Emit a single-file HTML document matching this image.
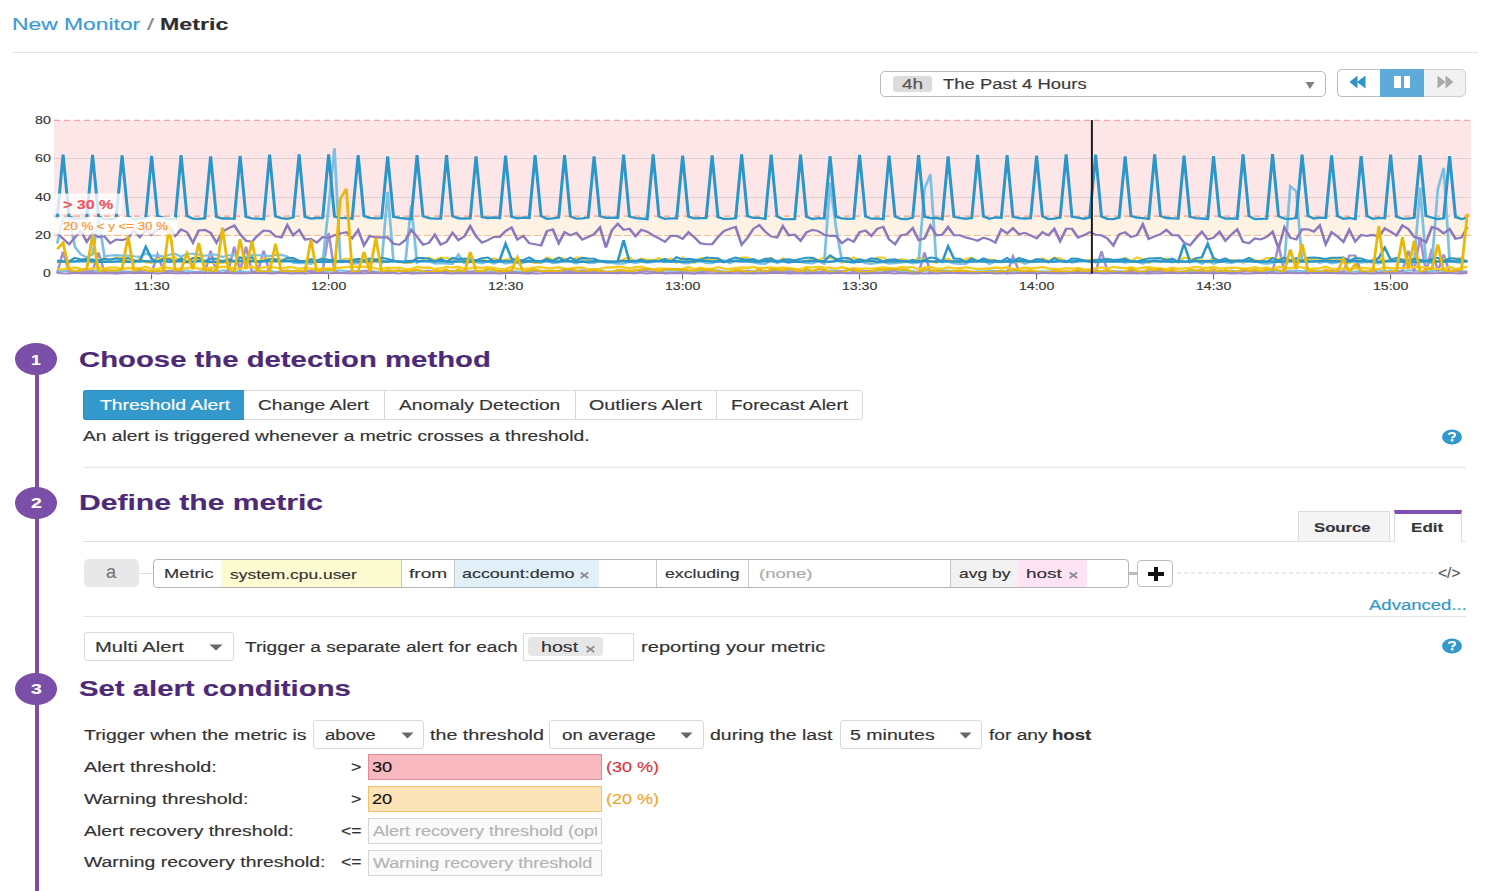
<!DOCTYPE html>
<html><head><meta charset="utf-8"><title>New Monitor / Metric</title>
<style>
html,body{margin:0;padding:0}
body{width:1496px;height:891px;overflow:hidden;background:#fff;position:relative;font-family:"Liberation Sans",sans-serif}
.t{position:absolute;white-space:nowrap;transform-origin:0 0;line-height:1;-webkit-text-stroke:0.15px currentColor}
.b{position:absolute;box-sizing:border-box}
svg.b{overflow:visible}
</style></head><body>
<div class="b" style="left:12.5px;top:52.0px;width:1465.5px;height:1.0px;background:#e3e3e3"></div>
<div class="b" style="left:880.4px;top:71.2px;width:445.4px;height:25.6px;border:1px solid #b9b9b9;border-radius:5px;background:#fff"></div>
<div class="b" style="left:893.0px;top:75.5px;width:39.0px;height:16.5px;background:#dcdcdc;border-radius:3px"></div>
<svg class="b" style="left:1305px;top:81px" width="10" height="9"><path d="M0.5,1 L9.5,1 L5,8 Z" fill="#808080"/></svg>
<div class="b" style="left:1337.4px;top:69.2px;width:128.9px;height:27.6px;border:1px solid #cfcfcf;border-radius:5px;background:#f1f1f1"></div>
<div class="b" style="left:1337.4px;top:69.2px;width:42.6px;height:27.6px;border:1px solid #bdbdbd;border-right:none;border-radius:5px 0 0 5px;background:#fff"></div>
<div class="b" style="left:1380.0px;top:69.2px;width:43.5px;height:27.6px;background:#5eaad8"></div>
<svg class="b" style="left:1349px;top:75px" width="18" height="14"><path d="M0.5,7 L8.5,0.5 L8.5,13.5 Z M8,7 L16.5,0.5 L16.5,13.5 Z" fill="#2e93c9"/></svg>
<div class="b" style="left:1394.0px;top:76.0px;width:6.5px;height:12.4px;background:#fff"></div>
<div class="b" style="left:1403.5px;top:76.0px;width:6.5px;height:12.4px;background:#fff"></div>
<svg class="b" style="left:1437px;top:75px" width="18" height="14"><path d="M0.5,0.5 L8.5,7 L0.5,13.5 Z M8.5,0.5 L16.5,7 L8.5,13.5 Z" fill="#a9a9a9"/></svg>
<svg class="b" style="left:0;top:0" width="1496" height="300">
<rect x="54" y="120.4" width="1417" height="95.8" fill="#fde6e7"/>
<rect x="54" y="216.2" width="1417" height="19.3" fill="#fef2e5"/>
<line x1="54" x2="1471" y1="158.5" y2="158.5" stroke="#ddd0d1" stroke-width="1"/>
<line x1="54" x2="1471" y1="197.5" y2="197.5" stroke="#ddd0d1" stroke-width="1"/>
<line x1="54" x2="1471" y1="120.4" y2="120.4" stroke="#f3a3a6" stroke-width="1.2" stroke-dasharray="6,4"/>
<line x1="54" x2="1471" y1="216.2" y2="216.2" stroke="#f4a080" stroke-width="1.2" stroke-dasharray="6,4"/>
<line x1="54" x2="1471" y1="235.5" y2="235.5" stroke="#f1bd8c" stroke-width="1.2" stroke-dasharray="7,3"/>
<clipPath id="pc"><rect x="54" y="100" width="1417" height="175"/></clipPath><g clip-path="url(#pc)">
<g transform="scale(1.300,1)">
<path d="M44.0,271.1 L48.5,270.9 L53.1,270.9 L57.6,271.7 L62.2,271.9 L66.7,271.3 L71.2,271.5 L75.8,270.6 L80.3,270.8 L84.8,271.0 L89.4,271.0 L93.9,270.9 L98.5,271.7 L103.0,271.2 L107.5,271.6 L112.1,270.5 L116.6,271.8 L121.2,270.6 L125.7,271.8 L130.2,270.8 L134.8,271.4 L139.3,271.3 L143.8,270.6 L148.4,271.8 L152.9,271.8 L157.5,270.5 L162.0,271.1 L166.5,271.7 L171.1,270.4 L175.6,270.4 L180.2,271.7 L184.7,271.2 L189.2,271.7 L193.8,271.4 L198.3,270.9 L202.8,271.6 L207.4,270.8 L211.9,271.8 L216.5,271.6 L221.0,270.6 L225.5,271.3 L230.1,271.2 L234.6,271.0 L239.2,271.1 L243.7,271.3 L248.2,271.8 L252.8,270.8 L257.3,270.4 L261.8,270.4 L266.4,270.9 L270.9,271.3 L275.5,271.3 L280.0,270.8 L284.5,270.8 L289.1,271.7 L293.6,271.5 L298.2,271.3 L302.7,271.1 L307.2,270.6 L311.8,271.1 L316.3,271.8 L320.8,270.6 L325.4,271.2 L329.9,271.1 L334.5,271.5 L339.0,271.2 L343.5,271.3 L348.1,270.7 L352.6,271.7 L357.2,271.0 L361.7,271.6 L366.2,270.8 L370.8,271.8 L375.3,271.5 L379.8,271.3 L384.4,270.9 L388.9,271.8 L393.5,271.2 L398.0,271.6 L402.5,271.4 L407.1,271.1 L411.6,270.4 L416.2,271.1 L420.7,270.4 L425.2,271.6 L429.8,270.5 L434.3,271.3 L438.8,271.6 L443.4,270.7 L447.9,270.5 L452.5,271.9 L457.0,271.5 L461.5,270.7 L466.1,271.4 L470.6,271.5 L475.2,271.9 L479.7,271.8 L484.2,270.9 L488.8,270.4 L493.3,270.3 L497.8,271.1 L502.4,271.8 L506.9,271.4 L511.5,270.7 L516.0,270.6 L520.5,270.9 L525.1,271.5 L529.6,271.1 L534.2,271.1 L538.7,270.9 L543.2,271.5 L547.8,270.4 L552.3,270.5 L556.8,271.6 L561.4,271.4 L565.9,270.5 L570.5,271.5 L575.0,270.4 L579.5,271.1 L584.1,270.8 L588.6,270.8 L593.2,271.5 L597.7,271.4 L602.2,271.5 L606.8,270.8 L611.3,270.8 L615.8,271.7 L620.4,270.5 L624.9,271.2 L629.5,271.5 L634.0,271.2 L638.5,270.4 L643.1,271.0 L647.6,270.9 L652.2,270.5 L656.7,270.4 L661.2,270.7 L665.8,271.2 L670.3,271.0 L674.8,270.5 L679.4,270.7 L683.9,271.0 L688.5,271.3 L693.0,271.3 L697.5,270.7 L702.1,271.0 L706.6,271.9 L711.2,270.8 L715.7,270.5 L720.2,270.7 L724.8,270.5 L729.3,270.5 L733.8,271.1 L738.4,270.7 L742.9,271.3 L747.5,271.7 L752.0,271.3 L756.5,271.4 L761.1,270.4 L765.6,270.8 L770.2,271.0 L774.7,270.9 L779.2,271.7 L783.8,271.1 L788.3,270.8 L792.8,271.3 L797.4,271.5 L801.9,271.3 L806.5,271.4 L811.0,270.8 L815.5,271.7 L820.1,271.7 L824.6,271.4 L829.2,270.8 L833.7,270.7 L838.2,270.9 L842.8,270.4 L847.3,271.3 L851.8,271.8 L856.4,271.1 L860.9,271.2 L865.5,271.6 L870.0,270.9 L874.5,271.4 L879.1,271.5 L883.6,271.4 L888.2,270.4 L892.7,271.9 L897.2,271.3 L901.8,271.4 L906.3,271.6 L910.8,271.2 L915.4,271.5 L919.9,270.5 L924.5,271.1 L929.0,270.8 L933.5,271.6 L938.1,271.2 L942.6,270.9 L947.2,270.6 L951.7,271.5 L956.2,271.2 L960.8,270.6 L965.3,270.6 L969.8,271.5 L974.4,271.1 L978.9,270.7 L983.5,271.3 L988.0,270.8 L992.5,270.9 L997.1,270.4 L1001.6,271.0 L1006.2,270.8 L1010.7,271.3 L1015.2,270.8 L1019.8,271.4 L1024.3,271.1 L1028.8,271.3 L1033.4,271.4 L1037.9,271.7 L1042.5,271.5 L1047.0,271.0 L1051.5,271.5 L1056.1,271.8 L1060.6,270.6 L1065.2,271.4 L1069.7,270.4 L1074.2,271.0 L1078.8,271.3 L1083.3,270.5 L1087.8,270.5 L1092.4,271.4 L1096.9,271.7 L1101.5,270.9 L1106.0,270.6 L1110.5,270.9 L1115.1,270.7 L1119.6,271.2 L1124.2,270.9 L1128.7,271.5" stroke="#7cc0e4" stroke-width="2.0" fill="none" stroke-linejoin="miter" stroke-miterlimit="4"/>
<path d="M44.0,273.1 L48.5,251.6 L53.1,271.7 L57.6,272.1 L62.2,272.9 L66.7,271.2 L71.2,271.1 L75.8,252.5 L80.3,272.1 L84.8,272.9 L89.4,273.6 L93.9,272.5 L98.5,271.8 L103.0,273.4 L107.5,271.2 L112.1,272.9 L116.6,272.9 L121.2,254.5 L125.7,270.5 L130.2,271.3 L134.8,270.9 L139.3,271.7 L143.8,273.5 L148.4,272.6 L152.9,272.1 L157.5,273.2 L162.0,250.6 L166.5,272.5 L171.1,273.1 L175.6,271.1 L180.2,246.8 L184.7,270.8 L189.2,246.8 L193.8,271.9 L198.3,272.5 L202.8,250.6 L207.4,273.0 L211.9,273.5 L216.5,270.9 L221.0,272.9 L225.5,271.2 L230.1,273.0 L234.6,270.6 L239.2,270.9 L243.7,271.3 L248.2,271.3 L252.8,232.8 L257.3,271.4 L261.8,273.2 L266.4,272.1 L270.9,271.1 L275.5,273.0 L280.0,270.8 L284.5,270.9 L289.1,272.3 L293.6,272.5 L298.2,272.2 L302.7,272.4 L307.2,270.6 L311.8,272.4 L316.3,273.5 L320.8,273.3 L325.4,271.4 L329.9,270.6 L334.5,272.1 L339.0,272.1 L343.5,271.9 L348.1,271.3 L352.6,272.9 L357.2,271.7 L361.7,271.9 L366.2,271.7 L370.8,273.0 L375.3,273.1 L379.8,272.5 L384.4,270.8 L388.9,272.5 L393.5,271.8 L398.0,272.7 L402.5,273.3 L407.1,273.4 L411.6,271.1 L416.2,271.2 L420.7,272.5 L425.2,271.5 L429.8,271.5 L434.3,270.8 L438.8,270.7 L443.4,272.4 L447.9,270.6 L452.5,270.7 L457.0,271.8 L461.5,270.9 L466.1,272.1 L470.6,272.4 L475.2,272.8 L479.7,270.9 L484.2,273.1 L488.8,273.4 L493.3,271.1 L497.8,271.2 L502.4,272.1 L506.9,271.0 L511.5,273.4 L516.0,272.8 L520.5,272.7 L525.1,272.3 L529.6,273.1 L534.2,273.4 L538.7,272.6 L543.2,270.8 L547.8,270.6 L552.3,271.3 L556.8,272.1 L561.4,272.8 L565.9,270.7 L570.5,272.0 L575.0,271.4 L579.5,273.5 L584.1,273.0 L588.6,271.0 L593.2,271.2 L597.7,270.9 L602.2,271.8 L606.8,272.3 L611.3,271.8 L615.8,271.0 L620.4,272.7 L624.9,272.0 L629.5,272.8 L634.0,271.2 L638.5,273.6 L643.1,271.5 L647.6,270.7 L652.2,273.5 L656.7,271.8 L661.2,271.6 L665.8,271.0 L670.3,271.8 L674.8,272.8 L679.4,272.4 L683.9,270.7 L688.5,270.8 L693.0,273.2 L697.5,273.3 L702.1,273.3 L706.6,273.5 L711.2,252.5 L715.7,273.2 L720.2,270.9 L724.8,271.6 L729.3,273.2 L733.8,271.9 L738.4,272.6 L742.9,272.1 L747.5,272.9 L752.0,273.1 L756.5,273.0 L761.1,272.4 L765.6,271.4 L770.2,271.9 L774.7,273.5 L779.2,256.4 L783.8,270.9 L788.3,271.2 L792.8,271.2 L797.4,273.6 L801.9,272.2 L806.5,273.4 L811.0,271.3 L815.5,273.1 L820.1,271.4 L824.6,272.8 L829.2,271.5 L833.7,272.6 L838.2,273.5 L842.8,272.4 L847.3,251.2 L851.8,270.8 L856.4,272.7 L860.9,272.1 L865.5,271.9 L870.0,270.7 L874.5,273.3 L879.1,271.8 L883.6,272.0 L888.2,271.3 L892.7,270.6 L897.2,272.6 L901.8,271.5 L906.3,272.0 L910.8,271.9 L915.4,273.4 L919.9,271.1 L924.5,270.6 L929.0,272.5 L933.5,272.6 L938.1,270.6 L942.6,273.3 L947.2,273.4 L951.7,273.4 L956.2,271.1 L960.8,271.3 L965.3,272.2 L969.8,271.7 L974.4,273.5 L978.9,271.6 L983.5,245.4 L988.0,272.0 L992.5,272.4 L997.1,272.4 L1001.6,272.9 L1006.2,273.5 L1010.7,272.3 L1015.2,272.8 L1019.8,271.4 L1024.3,271.1 L1028.8,271.4 L1033.4,272.2 L1037.9,255.4 L1042.5,255.4 L1047.0,272.1 L1051.5,271.7 L1056.1,270.6 L1060.6,273.3 L1065.2,272.1 L1069.7,272.1 L1074.2,271.4 L1078.8,270.9 L1083.3,250.6 L1087.8,271.7 L1092.4,237.2 L1096.9,271.6 L1101.5,248.7 L1106.0,271.5 L1110.5,254.5 L1115.1,272.8 L1119.6,270.8 L1124.2,272.4 L1128.7,271.7" stroke="#a38ed0" stroke-width="2.0" fill="none" stroke-linejoin="miter" stroke-miterlimit="4"/>
<path d="M44.0,262.6 L48.5,261.8 L53.1,261.3 L57.6,257.9 L62.2,260.2 L66.7,258.9 L71.2,262.5 L75.8,260.1 L80.3,258.2 L84.8,260.1 L89.4,257.6 L93.9,258.0 L98.5,260.9 L103.0,263.1 L107.5,258.7 L112.1,262.3 L116.6,263.0 L121.2,258.9 L125.7,258.2 L130.2,258.3 L134.8,257.6 L139.3,261.9 L143.8,262.6 L148.4,262.4 L152.9,257.5 L157.5,262.4 L162.0,262.2 L166.5,263.0 L171.1,262.8 L175.6,262.8 L180.2,261.0 L184.7,262.1 L189.2,261.3 L193.8,257.7 L198.3,262.1 L202.8,258.4 L207.4,258.8 L211.9,259.8 L216.5,259.8 L221.0,258.6 L225.5,259.7 L230.1,261.8 L234.6,261.2 L239.2,261.7 L243.7,260.8 L248.2,257.4 L252.8,260.6 L257.3,262.7 L261.8,260.3 L266.4,258.4 L270.9,260.5 L275.5,259.0 L280.0,262.5 L284.5,262.7 L289.1,259.3 L293.6,262.8 L298.2,261.3 L302.7,260.9 L307.2,262.0 L311.8,262.9 L316.3,263.0 L320.8,257.6 L325.4,259.1 L329.9,257.6 L334.5,260.2 L339.0,257.6 L343.5,258.1 L348.1,259.5 L352.6,260.1 L357.2,260.1 L361.7,261.8 L366.2,260.9 L370.8,258.9 L375.3,261.9 L379.8,258.2 L384.4,260.1 L388.9,259.6 L393.5,258.3 L398.0,259.4 L402.5,262.3 L407.1,261.6 L411.6,263.1 L416.2,262.9 L420.7,257.6 L425.2,259.7 L429.8,257.5 L434.3,258.6 L438.8,261.3 L443.4,257.5 L447.9,257.8 L452.5,260.4 L457.0,262.6 L461.5,261.2 L466.1,262.1 L470.6,261.0 L475.2,262.6 L479.7,259.0 L484.2,257.4 L488.8,261.9 L493.3,258.6 L497.8,259.7 L502.4,260.3 L506.9,257.9 L511.5,260.9 L516.0,258.4 L520.5,262.9 L525.1,257.5 L529.6,262.0 L534.2,263.0 L538.7,258.0 L543.2,258.9 L547.8,259.2 L552.3,258.7 L556.8,260.9 L561.4,262.4 L565.9,261.2 L570.5,257.6 L575.0,257.4 L579.5,261.7 L584.1,260.5 L588.6,260.5 L593.2,257.9 L597.7,263.0 L602.2,258.3 L606.8,261.6 L611.3,259.9 L615.8,262.3 L620.4,262.6 L624.9,258.0 L629.5,260.2 L634.0,257.5 L638.5,258.1 L643.1,258.7 L647.6,262.6 L652.2,259.7 L656.7,257.4 L661.2,260.2 L665.8,262.7 L670.3,262.0 L674.8,257.4 L679.4,257.5 L683.9,261.6 L688.5,261.2 L693.0,259.0 L697.5,260.2 L702.1,262.0 L706.6,257.4 L711.2,259.5 L715.7,261.0 L720.2,262.9 L724.8,260.1 L729.3,258.7 L733.8,262.0 L738.4,262.6 L742.9,258.9 L747.5,257.8 L752.0,260.9 L756.5,260.4 L761.1,259.4 L765.6,260.1 L770.2,262.3 L774.7,261.5 L779.2,261.9 L783.8,261.9 L788.3,262.6 L792.8,260.8 L797.4,261.8 L801.9,258.2 L806.5,261.2 L811.0,257.5 L815.5,258.4 L820.1,261.5 L824.6,262.2 L829.2,259.8 L833.7,260.3 L838.2,260.0 L842.8,262.4 L847.3,260.0 L851.8,258.7 L856.4,260.5 L860.9,261.6 L865.5,257.8 L870.0,261.4 L874.5,257.3 L879.1,259.1 L883.6,263.1 L888.2,260.5 L892.7,262.2 L897.2,258.5 L901.8,260.6 L906.3,262.6 L910.8,257.6 L915.4,258.5 L919.9,259.6 L924.5,259.8 L929.0,262.6 L933.5,257.4 L938.1,261.3 L942.6,260.1 L947.2,260.3 L951.7,260.4 L956.2,263.0 L960.8,257.9 L965.3,260.2 L969.8,260.8 L974.4,258.1 L978.9,258.1 L983.5,258.9 L988.0,257.9 L992.5,261.1 L997.1,262.5 L1001.6,261.1 L1006.2,259.6 L1010.7,258.5 L1015.2,258.8 L1019.8,259.5 L1024.3,259.6 L1028.8,259.2 L1033.4,259.8 L1037.9,263.0 L1042.5,259.9 L1047.0,261.5 L1051.5,262.7 L1056.1,259.5 L1060.6,258.2 L1065.2,261.4 L1069.7,259.2 L1074.2,259.5 L1078.8,259.2 L1083.3,258.1 L1087.8,259.1 L1092.4,262.6 L1096.9,259.5 L1101.5,261.1 L1106.0,260.7 L1110.5,259.2 L1115.1,262.1 L1119.6,259.5 L1124.2,257.7 L1128.7,262.6" stroke="#f6cc22" stroke-width="2.0" fill="none" stroke-linejoin="miter" stroke-miterlimit="4"/>
<path d="M44.0,243.5 L48.5,218.1 L53.1,218.1 L57.6,246.8 L62.2,254.5 L66.7,257.3 L71.2,254.3 L75.8,218.1 L80.3,256.4 L84.8,255.5 L89.4,255.1 L93.9,255.6 L98.5,255.5 L103.0,256.3 L107.5,256.9 L112.1,253.6 L116.6,255.9 L121.2,255.3 L125.7,256.6 L130.2,254.7 L134.8,253.9 L139.3,256.7 L143.8,253.7 L148.4,253.8 L152.9,254.6 L157.5,255.9 L162.0,254.5 L166.5,254.8 L171.1,256.9 L175.6,255.2 L180.2,255.3 L184.7,257.3 L189.2,257.0 L193.8,255.1 L198.3,255.3 L202.8,255.2 L207.4,256.1 L211.9,254.7 L216.5,254.9 L221.0,256.5 L225.5,262.8 L230.1,263.1 L234.6,262.9 L239.2,263.8 L243.7,261.1 L248.2,262.5 L252.8,206.6 L257.3,148.4 L261.8,260.4 L266.4,260.8 L270.9,264.0 L275.5,263.2 L280.0,260.5 L284.5,262.2 L289.1,260.3 L293.6,262.5 L298.2,191.8 L302.7,261.6 L307.2,261.0 L311.8,263.0 L316.3,205.2 L320.8,262.8 L325.4,260.3 L329.9,261.1 L334.5,263.6 L339.0,263.1 L343.5,263.6 L348.1,263.8 L352.6,254.5 L357.2,263.3 L361.7,261.9 L366.2,262.3 L370.8,263.3 L375.3,261.2 L379.8,263.5 L384.4,261.6 L388.9,263.6 L393.5,262.4 L398.0,263.2 L402.5,263.0 L407.1,260.3 L411.6,260.9 L416.2,262.9 L420.7,260.6 L425.2,263.2 L429.8,262.5 L434.3,260.8 L438.8,261.6 L443.4,263.6 L447.9,260.2 L452.5,263.2 L457.0,263.0 L461.5,261.1 L466.1,262.8 L470.6,262.9 L475.2,263.7 L479.7,263.7 L484.2,261.8 L488.8,263.1 L493.3,261.7 L497.8,262.6 L502.4,262.3 L506.9,260.4 L511.5,262.2 L516.0,261.8 L520.5,260.7 L525.1,263.3 L529.6,263.4 L534.2,260.5 L538.7,260.9 L543.2,263.1 L547.8,263.3 L552.3,261.2 L556.8,260.4 L561.4,263.3 L565.9,260.4 L570.5,260.6 L575.0,261.7 L579.5,262.4 L584.1,263.6 L588.6,263.9 L593.2,260.3 L597.7,263.1 L602.2,261.3 L606.8,263.0 L611.3,260.9 L615.8,261.7 L620.4,262.9 L624.9,263.4 L629.5,261.3 L634.0,263.8 L638.5,182.6 L643.1,227.6 L647.6,260.8 L652.2,261.7 L656.7,263.0 L661.2,260.5 L665.8,263.2 L670.3,264.0 L674.8,263.0 L679.4,262.3 L683.9,263.8 L688.5,263.3 L693.0,262.6 L697.5,261.8 L702.1,263.5 L706.6,262.6 L711.2,188.6 L715.7,174.4 L720.2,261.5 L724.8,261.4 L729.3,261.8 L733.8,263.5 L738.4,263.9 L742.9,264.0 L747.5,260.5 L752.0,261.3 L756.5,260.3 L761.1,263.9 L765.6,261.6 L770.2,262.2 L774.7,261.2 L779.2,262.8 L783.8,260.2 L788.3,263.7 L792.8,261.9 L797.4,261.2 L801.9,260.6 L806.5,261.2 L811.0,261.3 L815.5,261.0 L820.1,260.5 L824.6,262.7 L829.2,261.4 L833.7,260.6 L838.2,260.7 L842.8,262.4 L847.3,261.0 L851.8,260.7 L856.4,261.8 L860.9,261.6 L865.5,262.6 L870.0,261.8 L874.5,261.7 L879.1,263.7 L883.6,261.6 L888.2,260.2 L892.7,260.7 L897.2,261.2 L901.8,262.5 L906.3,261.2 L910.8,261.8 L915.4,262.3 L919.9,260.8 L924.5,263.7 L929.0,261.2 L933.5,263.9 L938.1,261.7 L942.6,262.2 L947.2,263.1 L951.7,261.4 L956.2,262.1 L960.8,261.7 L965.3,260.5 L969.8,263.0 L974.4,264.0 L978.9,262.9 L983.5,261.4 L988.0,263.2 L992.5,186.1 L997.1,191.3 L1001.6,261.5 L1006.2,262.3 L1010.7,260.6 L1015.2,262.8 L1019.8,261.5 L1024.3,263.3 L1028.8,262.4 L1033.4,260.9 L1037.9,260.5 L1042.5,260.7 L1047.0,262.6 L1051.5,261.8 L1056.1,262.8 L1060.6,263.5 L1065.2,262.1 L1069.7,260.8 L1074.2,260.8 L1078.8,261.3 L1083.3,260.4 L1087.8,263.0 L1092.4,187.6 L1096.9,262.3 L1101.5,263.0 L1106.0,189.3 L1110.5,167.7 L1115.1,261.6 L1119.6,262.1 L1124.2,262.8 L1128.7,260.8" stroke="#7cc0e4" stroke-width="2.1" fill="none" stroke-linejoin="miter" stroke-miterlimit="4"/>
<path d="M44.0,260.4 L48.5,261.2 L53.1,261.5 L57.6,257.8 L62.2,259.4 L66.7,258.9 L71.2,259.5 L75.8,260.4 L80.3,258.7 L84.8,259.4 L89.4,258.4 L93.9,259.0 L98.5,258.1 L103.0,260.1 L107.5,261.5 L112.1,246.8 L116.6,258.7 L121.2,261.5 L125.7,259.0 L130.2,259.2 L134.8,262.0 L139.3,258.4 L143.8,262.1 L148.4,258.0 L152.9,258.1 L157.5,261.2 L162.0,258.7 L166.5,258.7 L171.1,261.7 L175.6,259.0 L180.2,261.7 L184.7,257.8 L189.2,258.9 L193.8,257.4 L198.3,262.0 L202.8,260.7 L207.4,259.2 L211.9,259.3 L216.5,261.4 L221.0,257.9 L225.5,258.1 L230.1,260.8 L234.6,261.6 L239.2,259.0 L243.7,260.3 L248.2,259.0 L252.8,259.8 L257.3,260.3 L261.8,262.2 L266.4,261.6 L270.9,260.0 L275.5,258.7 L280.0,260.2 L284.5,258.6 L289.1,259.6 L293.6,257.9 L298.2,259.0 L302.7,260.7 L307.2,261.6 L311.8,262.0 L316.3,262.1 L320.8,258.0 L325.4,257.9 L329.9,258.6 L334.5,261.8 L339.0,259.0 L343.5,261.7 L348.1,257.9 L352.6,259.0 L357.2,258.6 L361.7,259.3 L366.2,260.2 L370.8,258.1 L375.3,257.5 L379.8,261.1 L384.4,260.1 L388.9,243.7 L393.5,258.9 L398.0,260.3 L402.5,260.1 L407.1,257.5 L411.6,260.9 L416.2,261.2 L420.7,258.9 L425.2,260.9 L429.8,257.8 L434.3,260.7 L438.8,257.7 L443.4,260.4 L447.9,257.9 L452.5,258.6 L457.0,258.7 L461.5,261.2 L466.1,261.5 L470.6,262.1 L475.2,261.4 L479.7,240.3 L484.2,262.0 L488.8,261.1 L493.3,259.5 L497.8,261.5 L502.4,260.7 L506.9,261.2 L511.5,258.9 L516.0,261.7 L520.5,257.3 L525.1,259.3 L529.6,258.8 L534.2,259.6 L538.7,259.8 L543.2,257.5 L547.8,257.9 L552.3,258.2 L556.8,262.2 L561.4,259.4 L565.9,257.6 L570.5,259.1 L575.0,259.7 L579.5,259.1 L584.1,261.4 L588.6,258.7 L593.2,258.4 L597.7,261.9 L602.2,259.8 L606.8,259.3 L611.3,260.5 L615.8,258.9 L620.4,257.7 L624.9,257.8 L629.5,260.8 L634.0,261.5 L638.5,255.4 L643.1,259.3 L647.6,258.2 L652.2,258.0 L656.7,260.9 L661.2,259.4 L665.8,260.8 L670.3,258.3 L674.8,258.9 L679.4,261.1 L683.9,259.8 L688.5,259.3 L693.0,261.1 L697.5,261.4 L702.1,259.9 L706.6,261.9 L711.2,259.8 L715.7,257.6 L720.2,258.2 L724.8,262.0 L729.3,246.2 L733.8,258.7 L738.4,258.8 L742.9,262.2 L747.5,258.5 L752.0,261.3 L756.5,258.3 L761.1,260.7 L765.6,260.5 L770.2,261.4 L774.7,258.0 L779.2,261.2 L783.8,258.0 L788.3,259.7 L792.8,261.6 L797.4,259.0 L801.9,259.7 L806.5,262.2 L811.0,258.2 L815.5,261.0 L820.1,262.2 L824.6,258.5 L829.2,258.7 L833.7,260.4 L838.2,261.4 L842.8,259.7 L847.3,259.4 L851.8,258.9 L856.4,259.9 L860.9,259.5 L865.5,258.7 L870.0,261.4 L874.5,261.4 L879.1,259.9 L883.6,258.5 L888.2,258.3 L892.7,258.1 L897.2,260.1 L901.8,258.7 L906.3,261.8 L910.8,243.7 L915.4,262.0 L919.9,258.1 L924.5,257.3 L929.0,243.7 L933.5,258.6 L938.1,260.4 L942.6,258.3 L947.2,261.9 L951.7,260.5 L956.2,260.6 L960.8,258.0 L965.3,261.4 L969.8,261.5 L974.4,261.9 L978.9,258.1 L983.5,260.7 L988.0,257.8 L992.5,260.7 L997.1,258.1 L1001.6,261.3 L1006.2,257.8 L1010.7,257.5 L1015.2,257.9 L1019.8,258.9 L1024.3,257.8 L1028.8,257.7 L1033.4,257.5 L1037.9,260.9 L1042.5,258.1 L1047.0,258.4 L1051.5,260.6 L1056.1,261.5 L1060.6,257.8 L1065.2,247.7 L1069.7,259.7 L1074.2,257.9 L1078.8,259.9 L1083.3,261.0 L1087.8,258.9 L1092.4,259.7 L1096.9,260.9 L1101.5,258.9 L1106.0,257.8 L1110.5,261.1 L1115.1,258.3 L1119.6,258.5 L1124.2,259.7 L1128.7,261.3" stroke="#2b96c9" stroke-width="2.0" fill="none" stroke-linejoin="miter" stroke-miterlimit="4"/>
<path d="M44.0,261.2 L48.5,261.8 L53.1,261.6 L57.6,261.6 L62.2,261.1 L66.7,261.2 L71.2,261.0 L75.8,261.7 L80.3,261.4 L84.8,261.8 L89.4,261.6 L93.9,261.3 L98.5,261.8 L103.0,261.6 L107.5,261.2 L112.1,261.3 L116.6,261.6 L121.2,261.3 L125.7,261.0 L130.2,261.8 L134.8,261.1 L139.3,261.2 L143.8,261.5 L148.4,261.7 L152.9,260.9 L157.5,261.5 L162.0,261.7 L166.5,261.7 L171.1,261.0 L175.6,261.2 L180.2,261.0 L184.7,261.1 L189.2,261.3 L193.8,260.9 L198.3,261.5 L202.8,261.3 L207.4,261.0 L211.9,261.2 L216.5,261.0 L221.0,261.3 L225.5,261.1 L230.1,261.8 L234.6,261.6 L239.2,261.5 L243.7,261.7 L248.2,261.6 L252.8,261.7 L257.3,261.6 L261.8,261.2 L266.4,261.5 L270.9,261.5 L275.5,261.6 L280.0,261.6 L284.5,260.9 L289.1,261.2 L293.6,261.2 L298.2,261.7 L302.7,261.1 L307.2,261.7 L311.8,261.5 L316.3,260.9 L320.8,261.2 L325.4,261.3 L329.9,261.2 L334.5,261.0 L339.0,261.1 L343.5,261.6 L348.1,261.8 L352.6,261.5 L357.2,261.6 L361.7,261.6 L366.2,260.9 L370.8,261.0 L375.3,261.5 L379.8,261.2 L384.4,261.4 L388.9,260.9 L393.5,261.4 L398.0,261.6 L402.5,261.6 L407.1,261.3 L411.6,261.6 L416.2,261.3 L420.7,261.0 L425.2,261.4 L429.8,261.6 L434.3,260.9 L438.8,261.3 L443.4,261.7 L447.9,261.8 L452.5,261.7 L457.0,261.2 L461.5,261.1 L466.1,261.4 L470.6,261.8 L475.2,261.5 L479.7,260.9 L484.2,261.3 L488.8,260.9 L493.3,261.0 L497.8,261.8 L502.4,261.1 L506.9,261.2 L511.5,261.3 L516.0,261.6 L520.5,261.2 L525.1,261.7 L529.6,261.4 L534.2,261.4 L538.7,260.9 L543.2,261.0 L547.8,261.6 L552.3,261.3 L556.8,261.7 L561.4,260.9 L565.9,261.0 L570.5,261.5 L575.0,261.2 L579.5,261.2 L584.1,261.7 L588.6,261.1 L593.2,261.3 L597.7,261.1 L602.2,261.3 L606.8,261.8 L611.3,261.5 L615.8,261.8 L620.4,260.9 L624.9,261.0 L629.5,261.0 L634.0,261.5 L638.5,261.8 L643.1,261.0 L647.6,260.9 L652.2,261.7 L656.7,261.4 L661.2,261.8 L665.8,261.1 L670.3,261.1 L674.8,261.7 L679.4,261.4 L683.9,261.3 L688.5,261.6 L693.0,261.0 L697.5,261.4 L702.1,261.6 L706.6,261.3 L711.2,261.1 L715.7,261.6 L720.2,261.5 L724.8,260.9 L729.3,261.2 L733.8,261.4 L738.4,261.3 L742.9,261.7 L747.5,261.6 L752.0,261.5 L756.5,261.3 L761.1,261.6 L765.6,261.6 L770.2,261.8 L774.7,261.2 L779.2,261.6 L783.8,261.0 L788.3,261.0 L792.8,261.8 L797.4,261.6 L801.9,261.2 L806.5,261.6 L811.0,261.7 L815.5,260.9 L820.1,261.3 L824.6,261.4 L829.2,261.1 L833.7,261.0 L838.2,261.6 L842.8,261.7 L847.3,261.4 L851.8,261.4 L856.4,261.4 L860.9,261.1 L865.5,261.2 L870.0,260.9 L874.5,261.7 L879.1,261.4 L883.6,261.5 L888.2,261.0 L892.7,261.6 L897.2,261.6 L901.8,261.4 L906.3,261.4 L910.8,261.6 L915.4,261.6 L919.9,260.9 L924.5,261.4 L929.0,261.0 L933.5,261.3 L938.1,261.8 L942.6,260.9 L947.2,261.0 L951.7,260.9 L956.2,260.9 L960.8,261.0 L965.3,261.7 L969.8,261.4 L974.4,261.6 L978.9,261.4 L983.5,261.8 L988.0,261.5 L992.5,260.9 L997.1,261.6 L1001.6,261.1 L1006.2,261.4 L1010.7,261.4 L1015.2,260.9 L1019.8,260.9 L1024.3,261.3 L1028.8,261.1 L1033.4,261.7 L1037.9,261.5 L1042.5,260.9 L1047.0,261.3 L1051.5,261.3 L1056.1,261.1 L1060.6,261.8 L1065.2,261.3 L1069.7,261.3 L1074.2,261.0 L1078.8,261.7 L1083.3,260.9 L1087.8,261.7 L1092.4,261.6 L1096.9,261.3 L1101.5,261.2 L1106.0,261.6 L1110.5,261.7 L1115.1,261.0 L1119.6,261.6 L1124.2,261.3 L1128.7,261.2" stroke="#2b96c9" stroke-width="2.5" fill="none" stroke-linejoin="miter" stroke-miterlimit="4"/>
<path d="M44.0,233.2 L48.5,238.7 L53.1,244.3 L57.6,237.5 L62.2,230.7 L66.7,241.8 L71.2,233.2 L75.8,237.2 L80.3,236.3 L84.8,243.3 L89.4,239.5 L93.9,240.1 L98.5,238.2 L103.0,230.7 L107.5,237.2 L112.1,230.3 L116.6,234.9 L121.2,228.8 L125.7,229.7 L130.2,226.3 L134.8,235.9 L139.3,229.4 L143.8,232.2 L148.4,242.6 L152.9,230.5 L157.5,229.9 L162.0,232.8 L166.5,242.6 L171.1,231.7 L175.6,228.4 L180.2,225.5 L184.7,234.2 L189.2,240.7 L193.8,241.8 L198.3,235.3 L202.8,230.5 L207.4,231.1 L211.9,236.4 L216.5,237.6 L221.0,225.0 L225.5,235.3 L230.1,229.9 L234.6,239.5 L239.2,238.9 L243.7,242.6 L248.2,237.0 L252.8,238.0 L257.3,235.3 L261.8,233.4 L266.4,232.2 L270.9,238.4 L275.5,229.9 L280.0,245.4 L284.5,235.9 L289.1,237.4 L293.6,237.4 L298.2,237.4 L302.7,243.7 L307.2,244.7 L311.8,240.1 L316.3,229.9 L320.8,236.8 L325.4,244.7 L329.9,243.0 L334.5,234.7 L339.0,244.7 L343.5,241.8 L348.1,232.8 L352.6,240.1 L357.2,236.4 L361.7,226.1 L366.2,236.4 L370.8,242.6 L375.3,240.1 L379.8,237.0 L384.4,237.0 L388.9,231.1 L393.5,227.4 L398.0,239.5 L402.5,235.9 L407.1,243.2 L411.6,244.3 L416.2,245.4 L420.7,231.1 L425.2,229.4 L429.8,243.2 L434.3,232.2 L438.8,235.3 L443.4,232.8 L447.9,239.5 L452.5,237.0 L457.0,234.2 L461.5,227.4 L466.1,247.4 L470.6,230.5 L475.2,223.8 L479.7,229.9 L484.2,228.8 L488.8,236.4 L493.3,229.9 L497.8,231.7 L502.4,235.3 L506.9,238.4 L511.5,241.8 L516.0,235.9 L520.5,235.9 L525.1,238.9 L529.6,232.2 L534.2,237.4 L538.7,243.2 L543.2,244.3 L547.8,244.3 L552.3,237.0 L556.8,231.1 L561.4,228.8 L565.9,226.9 L570.5,244.7 L575.0,237.8 L579.5,228.8 L584.1,225.0 L588.6,231.7 L593.2,236.4 L597.7,237.6 L602.2,226.1 L606.8,235.3 L611.3,234.7 L615.8,240.7 L620.4,232.2 L624.9,229.9 L629.5,231.1 L634.0,234.7 L638.5,235.9 L643.1,235.9 L647.6,243.2 L652.2,238.9 L656.7,241.8 L661.2,232.2 L665.8,230.5 L670.3,235.9 L674.8,228.8 L679.4,226.9 L683.9,239.5 L688.5,244.3 L693.0,235.3 L697.5,234.2 L702.1,228.2 L706.6,240.1 L711.2,238.4 L715.7,225.5 L720.2,235.3 L724.8,234.7 L729.3,226.9 L733.8,235.3 L738.4,235.3 L742.9,237.6 L747.5,238.9 L752.0,240.7 L756.5,237.6 L761.1,239.5 L765.6,242.6 L770.2,229.4 L774.7,233.4 L779.2,228.2 L783.8,234.2 L788.3,232.8 L792.8,235.3 L797.4,238.4 L801.9,232.2 L806.5,235.3 L811.0,228.8 L815.5,241.2 L820.1,228.8 L824.6,228.8 L829.2,237.6 L833.7,235.3 L838.2,232.2 L842.8,234.7 L847.3,235.3 L851.8,238.4 L856.4,245.4 L860.9,234.2 L865.5,232.2 L870.0,237.0 L874.5,235.3 L879.1,224.4 L883.6,238.9 L888.2,236.4 L892.7,234.2 L897.2,229.9 L901.8,235.3 L906.3,235.3 L910.8,242.6 L915.4,245.4 L919.9,238.4 L924.5,231.7 L929.0,239.5 L933.5,237.6 L938.1,231.7 L942.6,240.7 L947.2,234.7 L951.7,229.4 L956.2,241.8 L960.8,243.2 L965.3,238.4 L969.8,239.5 L974.4,237.0 L978.9,231.7 L983.5,248.5 L988.0,227.4 L992.5,237.6 L997.1,239.5 L1001.6,229.4 L1006.2,229.4 L1010.7,231.7 L1015.2,225.5 L1019.8,244.3 L1024.3,232.2 L1028.8,236.4 L1033.4,242.0 L1037.9,229.7 L1042.5,241.6 L1047.0,234.9 L1051.5,235.9 L1056.1,234.9 L1060.6,236.8 L1065.2,228.4 L1069.7,231.7 L1074.2,235.5 L1078.8,225.5 L1083.3,229.0 L1087.8,236.8 L1092.4,238.7 L1096.9,242.4 L1101.5,226.9 L1106.0,229.0 L1110.5,233.2 L1115.1,229.0 L1119.6,238.7 L1124.2,237.6 L1128.7,227.1" stroke="#8c79bd" stroke-width="2.1" fill="none" stroke-linejoin="miter" stroke-miterlimit="4"/>
<path d="M44.0,219.0 L48.5,154.5 L53.1,216.2 L57.6,218.8 L62.2,218.4 L66.7,218.4 L71.2,154.9 L75.8,216.2 L80.3,219.1 L84.8,219.2 L89.4,217.8 L93.9,155.4 L98.5,216.2 L103.0,219.2 L107.5,218.4 L112.1,218.0 L116.6,155.9 L121.2,216.0 L125.7,217.7 L130.2,219.2 L134.8,219.2 L139.3,155.2 L143.8,216.0 L148.4,218.6 L152.9,218.8 L157.5,218.5 L162.0,156.3 L166.5,216.9 L171.1,218.5 L175.6,218.4 L180.2,218.8 L184.7,155.9 L189.2,216.9 L193.8,218.4 L198.3,218.7 L202.8,219.2 L207.4,154.5 L211.9,216.5 L216.5,218.1 L221.0,218.9 L225.5,217.5 L230.1,154.4 L234.6,217.0 L239.2,218.6 L243.7,218.0 L248.2,218.0 L252.8,154.3 L257.3,216.6 L261.8,217.8 L266.4,218.1 L270.9,218.7 L275.5,155.1 L280.0,216.1 L284.5,217.8 L289.1,218.3 L293.6,218.2 L298.2,156.3 L302.7,216.8 L307.2,217.8 L311.8,218.5 L316.3,218.9 L320.8,155.1 L325.4,216.3 L329.9,218.1 L334.5,218.6 L339.0,218.5 L343.5,155.2 L348.1,216.2 L352.6,218.3 L357.2,218.5 L361.7,218.4 L366.2,156.3 L370.8,217.1 L375.3,218.0 L379.8,217.5 L384.4,218.2 L388.9,155.5 L393.5,216.9 L398.0,218.3 L402.5,217.5 L407.1,217.9 L411.6,155.2 L416.2,216.1 L420.7,218.8 L425.2,218.3 L429.8,217.6 L434.3,155.1 L438.8,216.6 L443.4,218.7 L447.9,218.3 L452.5,217.6 L457.0,156.4 L461.5,216.2 L466.1,217.8 L470.6,217.7 L475.2,217.9 L479.7,154.5 L484.2,216.5 L488.8,218.2 L493.3,218.5 L497.8,219.1 L502.4,154.4 L506.9,216.5 L511.5,218.9 L516.0,218.3 L520.5,218.4 L525.1,155.6 L529.6,216.7 L534.2,218.3 L538.7,218.1 L543.2,218.2 L547.8,155.3 L552.3,217.1 L556.8,218.8 L561.4,218.9 L565.9,218.2 L570.5,154.4 L575.0,216.2 L579.5,217.8 L584.1,217.8 L588.6,218.8 L593.2,154.5 L597.7,216.3 L602.2,219.1 L606.8,219.2 L611.3,219.2 L615.8,154.7 L620.4,216.8 L624.9,219.0 L629.5,218.1 L634.0,218.6 L638.5,156.2 L643.1,216.9 L647.6,218.3 L652.2,218.9 L656.7,218.7 L661.2,154.8 L665.8,216.6 L670.3,218.7 L674.8,218.4 L679.4,219.2 L683.9,155.5 L688.5,216.6 L693.0,218.9 L697.5,219.0 L702.1,217.7 L706.6,155.2 L711.2,216.9 L715.7,218.2 L720.2,217.8 L724.8,219.2 L729.3,156.4 L733.8,216.9 L738.4,218.0 L742.9,218.9 L747.5,218.0 L752.0,154.8 L756.5,216.5 L761.1,218.8 L765.6,217.5 L770.2,217.8 L774.7,155.2 L779.2,216.9 L783.8,218.1 L788.3,218.5 L792.8,218.2 L797.4,155.7 L801.9,216.4 L806.5,219.1 L811.0,218.7 L815.5,217.5 L820.1,154.4 L824.6,216.8 L829.2,217.7 L833.7,218.7 L838.2,217.6 L842.8,154.7 L847.3,216.6 L851.8,218.8 L856.4,219.2 L860.9,217.7 L865.5,156.3 L870.0,216.2 L874.5,217.6 L879.1,218.2 L883.6,218.9 L888.2,154.4 L892.7,216.0 L897.2,218.0 L901.8,218.3 L906.3,218.6 L910.8,155.6 L915.4,216.9 L919.9,218.1 L924.5,218.5 L929.0,218.9 L933.5,156.2 L938.1,216.3 L942.6,218.7 L947.2,218.4 L951.7,218.7 L956.2,154.4 L960.8,216.1 L965.3,219.2 L969.8,218.9 L974.4,218.6 L978.9,154.1 L983.5,216.2 L988.0,218.6 L992.5,218.8 L997.1,218.1 L1001.6,154.5 L1006.2,216.0 L1010.7,218.6 L1015.2,217.7 L1019.8,218.0 L1024.3,155.3 L1028.8,216.0 L1033.4,218.8 L1037.9,218.0 L1042.5,219.1 L1047.0,156.0 L1051.5,216.1 L1056.1,218.8 L1060.6,217.9 L1065.2,218.2 L1069.7,154.5 L1074.2,216.7 L1078.8,218.6 L1083.3,218.7 L1087.8,217.7 L1092.4,155.0 L1096.9,216.0 L1101.5,217.7 L1106.0,219.0 L1110.5,218.3 L1115.1,156.2 L1119.6,217.1 L1124.2,219.1 L1128.7,217.7" stroke="#2b96c9" stroke-width="2.3" fill="none" stroke-linejoin="miter" stroke-miterlimit="4"/>
<path d="M44.0,269.4 L48.5,269.1 L53.1,268.3 L57.6,267.6 L62.2,269.0 L66.7,269.1 L71.2,268.8 L75.8,267.4 L80.3,269.0 L84.8,267.4 L89.4,267.6 L93.9,269.0 L98.5,268.0 L103.0,268.2 L107.5,268.3 L112.1,266.7 L116.6,269.1 L121.2,269.3 L125.7,266.9 L130.2,268.3 L134.8,268.9 L139.3,268.5 L143.8,268.4 L148.4,266.8 L152.9,268.8 L157.5,268.8 L162.0,267.8 L166.5,267.9 L171.1,266.8 L175.6,267.1 L180.2,268.4 L184.7,268.8 L189.2,267.1 L193.8,266.7 L198.3,269.3 L202.8,267.4 L207.4,267.1 L211.9,267.6 L216.5,268.8 L221.0,267.3 L225.5,267.4 L230.1,268.9 L234.6,267.7 L239.2,268.8 L243.7,269.3 L248.2,268.5 L252.8,268.5 L257.3,268.3 L261.8,267.7 L266.4,267.1 L270.9,266.8 L275.5,266.8 L280.0,266.7 L284.5,267.3 L289.1,268.6 L293.6,268.9 L298.2,267.7 L302.7,267.9 L307.2,267.6 L311.8,269.1 L316.3,268.9 L320.8,266.9 L325.4,267.8 L329.9,267.5 L334.5,269.1 L339.0,268.3 L343.5,266.9 L348.1,267.6 L352.6,266.7 L357.2,268.9 L361.7,268.2 L366.2,267.2 L370.8,268.2 L375.3,267.3 L379.8,267.9 L384.4,269.1 L388.9,269.1 L393.5,266.8 L398.0,269.1 L402.5,268.9 L407.1,268.5 L411.6,267.5 L416.2,267.1 L420.7,268.1 L425.2,268.1 L429.8,267.3 L434.3,268.6 L438.8,268.4 L443.4,267.7 L447.9,267.7 L452.5,269.3 L457.0,269.1 L461.5,269.0 L466.1,267.4 L470.6,267.5 L475.2,266.8 L479.7,267.3 L484.2,268.7 L488.8,267.3 L493.3,266.7 L497.8,268.5 L502.4,269.4 L506.9,268.4 L511.5,268.6 L516.0,268.9 L520.5,269.3 L525.1,269.1 L529.6,267.1 L534.2,269.3 L538.7,267.7 L543.2,268.8 L547.8,268.9 L552.3,267.2 L556.8,268.6 L561.4,268.9 L565.9,268.2 L570.5,267.5 L575.0,268.0 L579.5,267.1 L584.1,268.3 L588.6,268.0 L593.2,267.5 L597.7,268.1 L602.2,267.5 L606.8,268.1 L611.3,269.0 L615.8,269.1 L620.4,267.3 L624.9,267.4 L629.5,266.9 L634.0,267.5 L638.5,267.8 L643.1,268.9 L647.6,267.1 L652.2,269.1 L656.7,268.2 L661.2,269.0 L665.8,268.4 L670.3,268.6 L674.8,268.2 L679.4,267.5 L683.9,267.9 L688.5,268.7 L693.0,267.3 L697.5,267.4 L702.1,267.2 L706.6,269.3 L711.2,267.7 L715.7,267.0 L720.2,268.7 L724.8,268.8 L729.3,267.2 L733.8,268.4 L738.4,268.3 L742.9,267.2 L747.5,268.4 L752.0,268.9 L756.5,268.8 L761.1,268.5 L765.6,267.5 L770.2,268.4 L774.7,267.3 L779.2,269.2 L783.8,268.7 L788.3,267.7 L792.8,268.1 L797.4,268.0 L801.9,266.9 L806.5,268.6 L811.0,268.9 L815.5,269.3 L820.1,268.1 L824.6,268.6 L829.2,268.1 L833.7,269.4 L838.2,269.4 L842.8,268.4 L847.3,267.4 L851.8,268.6 L856.4,266.9 L860.9,267.8 L865.5,268.3 L870.0,267.3 L874.5,268.8 L879.1,267.8 L883.6,267.1 L888.2,267.9 L892.7,268.5 L897.2,269.1 L901.8,267.8 L906.3,268.9 L910.8,268.4 L915.4,267.9 L919.9,266.9 L924.5,267.6 L929.0,268.0 L933.5,267.1 L938.1,268.6 L942.6,268.3 L947.2,267.6 L951.7,267.9 L956.2,268.8 L960.8,268.3 L965.3,267.2 L969.8,268.7 L974.4,267.5 L978.9,269.3 L983.5,266.8 L988.0,267.6 L992.5,268.5 L997.1,266.8 L1001.6,267.3 L1006.2,269.2 L1010.7,268.7 L1015.2,268.1 L1019.8,266.7 L1024.3,269.0 L1028.8,269.3 L1033.4,268.5 L1037.9,269.3 L1042.5,268.3 L1047.0,267.9 L1051.5,268.2 L1056.1,269.0 L1060.6,269.3 L1065.2,267.2 L1069.7,268.2 L1074.2,268.1 L1078.8,268.1 L1083.3,267.5 L1087.8,267.0 L1092.4,267.2 L1096.9,267.4 L1101.5,268.5 L1106.0,268.9 L1110.5,269.1 L1115.1,267.1 L1119.6,269.2 L1124.2,267.9 L1128.7,266.9" stroke="#f6cc22" stroke-width="2.4" fill="none" stroke-linejoin="miter" stroke-miterlimit="4"/>
<path d="M44.0,249.1 L48.5,242.6 L53.1,269.5 L57.6,271.6 L62.2,270.1 L66.7,269.2 L71.2,235.3 L75.8,271.9 L80.3,270.1 L84.8,270.3 L89.4,270.7 L93.9,268.9 L98.5,236.4 L103.0,270.9 L107.5,269.0 L112.1,270.2 L116.6,271.5 L121.2,271.5 L125.7,270.7 L130.2,225.7 L134.8,270.3 L139.3,269.8 L143.8,253.3 L148.4,269.4 L152.9,243.0 L157.5,270.5 L162.0,270.0 L166.5,272.2 L171.1,227.6 L175.6,268.9 L180.2,271.6 L184.7,239.1 L189.2,269.2 L193.8,241.0 L198.3,272.2 L202.8,271.4 L207.4,271.7 L211.9,243.7 L216.5,272.6 L221.0,270.6 L225.5,271.5 L230.1,271.1 L234.6,271.9 L239.2,239.5 L243.7,272.5 L248.2,269.3 L252.8,269.8 L257.3,270.5 L261.8,198.9 L266.4,188.6 L270.9,272.2 L275.5,271.4 L280.0,252.0 L284.5,271.6 L289.1,237.8 L293.6,271.9 L298.2,270.1 L302.7,270.9 L307.2,270.8 L311.8,271.3 L316.3,270.6 L320.8,269.6 L325.4,271.5 L329.9,272.4 L334.5,270.8 L339.0,271.2 L343.5,269.7 L348.1,272.2 L352.6,269.3 L357.2,272.6 L361.7,252.0 L366.2,270.9 L370.8,271.4 L375.3,269.2 L379.8,270.0 L384.4,272.0 L388.9,270.7 L393.5,270.3 L398.0,257.3 L402.5,272.3 L407.1,270.3 L411.6,269.8 L416.2,270.9 L420.7,271.0 L425.2,270.7 L429.8,271.6 L434.3,269.3 L438.8,269.0 L443.4,270.8 L447.9,272.6 L452.5,271.1 L457.0,269.6 L461.5,271.4 L466.1,272.2 L470.6,271.9 L475.2,269.9 L479.7,270.3 L484.2,271.5 L488.8,270.3 L493.3,269.7 L497.8,268.9 L502.4,269.5 L506.9,271.0 L511.5,269.5 L516.0,269.1 L520.5,269.3 L525.1,269.8 L529.6,270.4 L534.2,270.7 L538.7,269.4 L543.2,270.2 L547.8,269.9 L552.3,271.8 L556.8,272.3 L561.4,271.6 L565.9,270.4 L570.5,270.4 L575.0,271.9 L579.5,271.9 L584.1,269.0 L588.6,272.4 L593.2,269.1 L597.7,269.7 L602.2,270.4 L606.8,268.8 L611.3,270.0 L615.8,272.6 L620.4,269.0 L624.9,271.1 L629.5,269.1 L634.0,269.5 L638.5,272.1 L643.1,272.5 L647.6,272.6 L652.2,269.7 L656.7,269.6 L661.2,271.8 L665.8,272.2 L670.3,271.2 L674.8,269.6 L679.4,269.8 L683.9,269.3 L688.5,268.9 L693.0,269.8 L697.5,269.4 L702.1,272.6 L706.6,272.6 L711.2,269.3 L715.7,270.3 L720.2,271.4 L724.8,272.2 L729.3,271.4 L733.8,271.3 L738.4,270.7 L742.9,270.9 L747.5,271.9 L752.0,272.3 L756.5,271.9 L761.1,272.2 L765.6,272.3 L770.2,271.1 L774.7,272.1 L779.2,269.6 L783.8,270.6 L788.3,270.9 L792.8,270.2 L797.4,271.7 L801.9,272.6 L806.5,272.3 L811.0,271.4 L815.5,271.3 L820.1,271.7 L824.6,271.5 L829.2,269.4 L833.7,272.6 L838.2,270.9 L842.8,271.2 L847.3,271.6 L851.8,269.9 L856.4,271.8 L860.9,272.5 L865.5,272.0 L870.0,268.9 L874.5,271.3 L879.1,272.2 L883.6,268.9 L888.2,270.2 L892.7,269.0 L897.2,271.4 L901.8,269.5 L906.3,272.5 L910.8,271.7 L915.4,269.6 L919.9,270.7 L924.5,269.6 L929.0,271.2 L933.5,269.3 L938.1,272.3 L942.6,270.3 L947.2,271.9 L951.7,271.9 L956.2,269.3 L960.8,271.0 L965.3,269.5 L969.8,271.6 L974.4,269.8 L978.9,269.2 L983.5,270.2 L988.0,271.7 L992.5,249.5 L997.1,269.0 L1001.6,243.7 L1006.2,270.9 L1010.7,271.1 L1015.2,272.3 L1019.8,269.7 L1024.3,272.0 L1028.8,271.8 L1033.4,258.7 L1037.9,272.0 L1042.5,264.0 L1047.0,270.8 L1051.5,272.0 L1056.1,271.0 L1060.6,226.1 L1065.2,272.3 L1069.7,272.1 L1074.2,270.6 L1078.8,237.0 L1083.3,269.1 L1087.8,241.0 L1092.4,272.3 L1096.9,269.3 L1101.5,268.8 L1106.0,244.5 L1110.5,270.6 L1115.1,271.2 L1119.6,270.4 L1124.2,269.6 L1128.7,213.7" stroke="#e8b90c" stroke-width="2.2" fill="none" stroke-linejoin="miter" stroke-miterlimit="4"/>
<path d="M44.0,272.9 L48.5,273.3 L53.1,273.4 L57.6,272.8 L62.2,273.3 L66.7,273.3 L71.2,273.0 L75.8,273.2 L80.3,272.9 L84.8,273.3 L89.4,272.9 L93.9,273.2 L98.5,273.1 L103.0,272.9 L107.5,273.0 L112.1,272.9 L116.6,273.0 L121.2,273.4 L125.7,272.9 L130.2,273.1 L134.8,273.2 L139.3,273.3 L143.8,272.9 L148.4,273.1 L152.9,272.9 L157.5,273.0 L162.0,272.9 L166.5,273.1 L171.1,273.0 L175.6,273.1 L180.2,273.3 L184.7,272.9 L189.2,273.2 L193.8,273.0 L198.3,272.9 L202.8,273.0 L207.4,273.3 L211.9,272.9 L216.5,273.0 L221.0,273.3 L225.5,273.4 L230.1,273.1 L234.6,273.4 L239.2,272.9 L243.7,273.1 L248.2,273.1 L252.8,273.2 L257.3,273.0 L261.8,272.9 L266.4,273.2 L270.9,273.2 L275.5,273.1 L280.0,273.2 L284.5,273.1 L289.1,273.1 L293.6,273.2 L298.2,273.0 L302.7,273.1 L307.2,273.4 L311.8,272.8 L316.3,273.2 L320.8,273.2 L325.4,273.2 L329.9,272.9 L334.5,272.9 L339.0,273.1 L343.5,273.2 L348.1,273.4 L352.6,272.9 L357.2,273.3 L361.7,273.1 L366.2,273.2 L370.8,273.2 L375.3,273.2 L379.8,273.3 L384.4,273.4 L388.9,273.1 L393.5,273.0 L398.0,273.0 L402.5,273.3 L407.1,273.0 L411.6,273.4 L416.2,273.2 L420.7,272.9 L425.2,272.9 L429.8,273.1 L434.3,272.9 L438.8,273.1 L443.4,273.1 L447.9,273.1 L452.5,272.8 L457.0,273.0 L461.5,273.1 L466.1,273.0 L470.6,273.0 L475.2,273.2 L479.7,273.0 L484.2,272.9 L488.8,273.1 L493.3,272.9 L497.8,273.4 L502.4,273.1 L506.9,273.0 L511.5,273.2 L516.0,273.3 L520.5,273.0 L525.1,273.2 L529.6,273.3 L534.2,273.4 L538.7,272.9 L543.2,273.2 L547.8,273.3 L552.3,273.3 L556.8,273.3 L561.4,272.9 L565.9,273.3 L570.5,273.2 L575.0,273.4 L579.5,273.1 L584.1,273.3 L588.6,273.2 L593.2,273.0 L597.7,272.9 L602.2,272.9 L606.8,273.4 L611.3,273.2 L615.8,272.9 L620.4,273.4 L624.9,273.3 L629.5,273.1 L634.0,273.2 L638.5,273.0 L643.1,273.0 L647.6,273.1 L652.2,273.3 L656.7,273.3 L661.2,273.3 L665.8,273.4 L670.3,273.0 L674.8,273.3 L679.4,272.9 L683.9,273.0 L688.5,273.4 L693.0,273.1 L697.5,273.1 L702.1,273.4 L706.6,273.1 L711.2,273.4 L715.7,273.0 L720.2,273.4 L724.8,273.0 L729.3,272.8 L733.8,272.9 L738.4,273.3 L742.9,273.1 L747.5,273.3 L752.0,273.2 L756.5,272.9 L761.1,272.9 L765.6,273.4 L770.2,273.2 L774.7,273.0 L779.2,273.3 L783.8,272.9 L788.3,272.9 L792.8,273.1 L797.4,273.2 L801.9,272.9 L806.5,273.1 L811.0,273.3 L815.5,273.2 L820.1,273.3 L824.6,272.9 L829.2,273.1 L833.7,273.0 L838.2,272.9 L842.8,272.8 L847.3,273.3 L851.8,273.2 L856.4,272.9 L860.9,273.0 L865.5,273.2 L870.0,273.0 L874.5,273.3 L879.1,273.3 L883.6,273.4 L888.2,273.2 L892.7,273.3 L897.2,273.1 L901.8,272.9 L906.3,273.3 L910.8,273.1 L915.4,272.9 L919.9,273.1 L924.5,273.1 L929.0,273.0 L933.5,273.4 L938.1,272.9 L942.6,273.0 L947.2,272.9 L951.7,272.9 L956.2,273.4 L960.8,273.4 L965.3,273.3 L969.8,273.1 L974.4,272.9 L978.9,272.9 L983.5,273.2 L988.0,273.1 L992.5,273.0 L997.1,273.2 L1001.6,272.9 L1006.2,272.9 L1010.7,273.0 L1015.2,272.9 L1019.8,272.9 L1024.3,273.0 L1028.8,273.2 L1033.4,273.2 L1037.9,273.3 L1042.5,273.4 L1047.0,272.9 L1051.5,273.2 L1056.1,273.4 L1060.6,273.2 L1065.2,273.3 L1069.7,273.2 L1074.2,273.2 L1078.8,273.3 L1083.3,273.1 L1087.8,273.2 L1092.4,273.2 L1096.9,272.9 L1101.5,273.2 L1106.0,273.1 L1110.5,272.9 L1115.1,272.9 L1119.6,273.2 L1124.2,273.4 L1128.7,272.9" stroke="#9b87c6" stroke-width="2.0" fill="none" stroke-linejoin="miter" stroke-miterlimit="4"/>
</g>
</g>
<line x1="1091.9" x2="1091.9" y1="120" y2="273.6" stroke="#1d1d1d" stroke-width="2"/>
<line x1="151.6" x2="151.6" y1="274.3" y2="279.3" stroke="#555" stroke-width="1"/>
<line x1="328.6" x2="328.6" y1="274.3" y2="279.3" stroke="#555" stroke-width="1"/>
<line x1="505.6" x2="505.6" y1="274.3" y2="279.3" stroke="#555" stroke-width="1"/>
<line x1="682.6" x2="682.6" y1="274.3" y2="279.3" stroke="#555" stroke-width="1"/>
<line x1="859.6" x2="859.6" y1="274.3" y2="279.3" stroke="#555" stroke-width="1"/>
<line x1="1036.6" x2="1036.6" y1="274.3" y2="279.3" stroke="#555" stroke-width="1"/>
<line x1="1213.6" x2="1213.6" y1="274.3" y2="279.3" stroke="#555" stroke-width="1"/>
<line x1="1390.6" x2="1390.6" y1="274.3" y2="279.3" stroke="#555" stroke-width="1"/>
<rect x="54.4" y="193.5" width="68" height="20.2" rx="3" fill="#fff" fill-opacity="0.78"/>
<rect x="54.4" y="217" width="122.6" height="17.6" rx="3" fill="#fff" fill-opacity="0.82"/>
</svg>
<div class="b" style="left:35.2px;top:375.0px;width:3.6px;height:516.0px;background:#7b4ea8"></div>
<div class="b" style="left:35.2px;top:440.0px;width:3.6px;height:260.0px;background:#7b4ea8"></div>
<div class="b" style="left:15.4px;top:343.3px;width:41.4px;height:31.7px;background:#7b4ea8;border-radius:50%"></div>
<div class="b" style="left:15.4px;top:487.1px;width:41.4px;height:31.7px;background:#7b4ea8;border-radius:50%"></div>
<div class="b" style="left:15.4px;top:672.9px;width:41.4px;height:31.7px;background:#7b4ea8;border-radius:50%"></div>
<div class="b" style="left:83.4px;top:390.2px;width:779.5px;height:30.0px;border:1px solid #dadada;border-radius:3px;background:#fff"></div>
<div class="b" style="left:83.4px;top:390.2px;width:160.5px;height:30.0px;background:#3398cc;border:1px solid #2c8dc0;border-right:none;border-radius:3px 0 0 3px"></div>
<div class="b" style="left:383.6px;top:390.2px;width:1.0px;height:30.0px;background:#dadada"></div>
<div class="b" style="left:574.8px;top:390.2px;width:1.0px;height:30.0px;background:#dadada"></div>
<div class="b" style="left:716.4px;top:390.2px;width:1.0px;height:30.0px;background:#dadada"></div>
<svg class="b" style="left:1441px;top:428.6px" width="22" height="16"><ellipse cx="11" cy="8" rx="10" ry="7.5" fill="#3398cc"/><path d="M7.6,5.6 C8.2,3.6 13.8,3.2 14.2,5.6 C14.5,7.4 11.5,7.6 11,9.3" stroke="#fff" stroke-width="2" fill="none"/><rect x="9.8" y="10.2" width="2.6" height="2.2" fill="#fff"/></svg>
<svg class="b" style="left:1441px;top:638.3px" width="22" height="16"><ellipse cx="11" cy="8" rx="10" ry="7.5" fill="#3398cc"/><path d="M7.6,5.6 C8.2,3.6 13.8,3.2 14.2,5.6 C14.5,7.4 11.5,7.6 11,9.3" stroke="#fff" stroke-width="2" fill="none"/><rect x="9.8" y="10.2" width="2.6" height="2.2" fill="#fff"/></svg>
<div class="b" style="left:83.0px;top:466.5px;width:1383.0px;height:1.0px;background:#e6e6e6"></div>
<div class="b" style="left:83.0px;top:540.5px;width:1383.0px;height:1.0px;background:#e0e0e0"></div>
<div class="b" style="left:1297.5px;top:511.1px;width:92.1px;height:30.4px;background:#f4f4f4;border:1px solid #dcdcdc;border-bottom:none"></div>
<div class="b" style="left:1394.0px;top:510.3px;width:68.0px;height:31.2px;background:#fff;border:1px solid #dcdcdc;border-top:4px solid #7e4eb0;border-bottom:none"></div>
<div class="b" style="left:1395.0px;top:539.8px;width:66.0px;height:2.2px;background:#fff"></div>
<div class="b" style="left:83.8px;top:559.4px;width:55.4px;height:27.5px;background:#e8e8e8;border-radius:5px"></div>
<div class="b" style="left:139.0px;top:572.5px;width:15.0px;height:1.0px;background:#dddddd"></div>
<div class="b" style="left:153.4px;top:559.2px;width:975.4px;height:28.6px;border:1px solid #b4b4ba;border-radius:4px;background:#fff"></div>
<div class="b" style="left:221.0px;top:560.2px;width:180.3px;height:26.6px;background:#fdfbd1"></div>
<div class="b" style="left:454.6px;top:560.2px;width:144.0px;height:26.6px;background:#e1eff8"></div>
<div class="b" style="left:950.5px;top:560.2px;width:67.5px;height:26.6px;background:#f2f2f2"></div>
<div class="b" style="left:1018.0px;top:560.2px;width:68.8px;height:26.6px;background:#fde3f3"></div>
<div class="b" style="left:400.8px;top:560.2px;width:1.0px;height:26.6px;background:#c8c8c8"></div>
<div class="b" style="left:454.1px;top:560.2px;width:1.0px;height:26.6px;background:#c8c8c8"></div>
<div class="b" style="left:656.0px;top:560.2px;width:1.0px;height:26.6px;background:#c8c8c8"></div>
<div class="b" style="left:748.1px;top:560.2px;width:1.0px;height:26.6px;background:#c8c8c8"></div>
<div class="b" style="left:950.0px;top:560.2px;width:1.0px;height:26.6px;background:#c8c8c8"></div>
<div class="b" style="left:1128.8px;top:571.5px;width:8.2px;height:3.0px;background:#bdbdbd"></div>
<div class="b" style="left:1137.0px;top:559.5px;width:36.4px;height:27.8px;border:1px solid #bdbdbd;border-radius:4px;background:#fff"></div>
<div class="b" style="left:1148.0px;top:572.0px;width:15.7px;height:3.6px;background:#111"></div>
<div class="b" style="left:1154.0px;top:566.8px;width:3.8px;height:14.0px;background:#111"></div>
<svg class="b" style="left:1177px;top:572px" width="256" height="2"><line x1="0" x2="256" y1="1" y2="1" stroke="#d6d6d6" stroke-width="1" stroke-dasharray="4,3"/></svg>
<div class="b" style="left:83.0px;top:615.5px;width:1383.0px;height:1.0px;background:#e6e6e6"></div>
<div class="b" style="left:84.0px;top:632.0px;width:149.8px;height:28.6px;border:1px solid #dadada;border-radius:3px;background:#fff"></div>
<svg class="b" style="left:209px;top:643.5px" width="14" height="7"><path d="M0.5,0.5 L13.5,0.5 L7,6.5 Z" fill="#666"/></svg>
<div class="b" style="left:522.6px;top:632.6px;width:111.8px;height:28.1px;border:1px solid #dadada;background:#fff"></div>
<div class="b" style="left:528.3px;top:637.4px;width:74.4px;height:19.1px;background:#e6e6e6;border-radius:3px"></div>
<div class="b" style="left:312.6px;top:720.4px;width:111.8px;height:28.3px;border:1px solid #dadada;border-radius:3px;background:#fff"></div>
<svg class="b" style="left:401.0px;top:732px" width="14" height="7"><path d="M0.5,0.5 L12.5,0.5 L6.5,6.5 Z" fill="#666"/></svg>
<div class="b" style="left:549.3px;top:720.4px;width:155.0px;height:28.3px;border:1px solid #dadada;border-radius:3px;background:#fff"></div>
<svg class="b" style="left:680.4px;top:732px" width="14" height="7"><path d="M0.5,0.5 L12.5,0.5 L6.5,6.5 Z" fill="#666"/></svg>
<div class="b" style="left:839.5px;top:720.4px;width:142.6px;height:28.3px;border:1px solid #dadada;border-radius:3px;background:#fff"></div>
<svg class="b" style="left:958.8px;top:732px" width="14" height="7"><path d="M0.5,0.5 L12.5,0.5 L6.5,6.5 Z" fill="#666"/></svg>
<div class="b" style="left:368.1px;top:753.9px;width:233.6px;height:26.1px;background:#f8b8bf;border:1px solid #e3899a"></div>
<div class="b" style="left:368.1px;top:785.9px;width:233.6px;height:26.1px;background:#fde4b8;border:1px solid #f1c26e"></div>
<div class="b" style="left:368.1px;top:818.0px;width:233.6px;height:25.7px;background:#fafafa;border:1px solid #d6d6d6"></div>
<div class="b" style="left:368.1px;top:849.5px;width:233.6px;height:26.1px;background:#fafafa;border:1px solid #d6d6d6"></div>
<div class="b" style="left:369.1px;top:819px;width:228px;height:24px;overflow:hidden"><span class="t" style="left:4.20px;top:5.26px;font-size:14px;color:#b3b3b3;transform:scaleX(1.2847)">Alert recovery threshold (optional)</span></div>
<svg class="b" style="left:580.0px;top:572.0px" width="9" height="6.5"><path d="M0.6,0.5 L8.2,6 M0.6,6 L8.2,0.5" stroke="#8c888b" stroke-width="1.6"/></svg>
<svg class="b" style="left:1068.6px;top:572.0px" width="9" height="6.5"><path d="M0.6,0.5 L8.2,6 M0.6,6 L8.2,0.5" stroke="#8c888b" stroke-width="1.6"/></svg>
<svg class="b" style="left:586.2px;top:645.5px" width="9" height="6.5"><path d="M0.6,0.5 L8.2,6 M0.6,6 L8.2,0.5" stroke="#8c888b" stroke-width="1.6"/></svg>
<span class="t" style="left:12.04px;top:17.00px;font-size:16.80px;font-weight:400;color:#3a9ad3;transform:scaleX(1.3613)">New Monitor</span>
<span class="t" style="left:147.00px;top:17.00px;font-size:16.80px;font-weight:400;color:#8a8a8a;transform:scaleX(1.5200)">/</span>
<span class="t" style="left:159.92px;top:17.00px;font-size:16.80px;font-weight:700;color:#2e2e30;transform:scaleX(1.3812)">Metric</span>
<span class="t" style="left:901.80px;top:76.00px;font-size:15.00px;font-weight:400;color:#555555;transform:scaleX(1.2688)">4h</span>
<span class="t" style="left:943.00px;top:76.00px;font-size:15.50px;font-weight:400;color:#3a3a3a;transform:scaleX(1.1917)">The Past 4 Hours</span>
<span class="t" style="left:34.70px;top:115.00px;font-size:11.00px;font-weight:400;color:#333333;transform:scaleX(1.2917)">80</span>
<span class="t" style="left:34.70px;top:153.00px;font-size:11.00px;font-weight:400;color:#333333;transform:scaleX(1.2917)">60</span>
<span class="t" style="left:34.70px;top:192.00px;font-size:11.00px;font-weight:400;color:#333333;transform:scaleX(1.2917)">40</span>
<span class="t" style="left:34.70px;top:230.00px;font-size:11.00px;font-weight:400;color:#333333;transform:scaleX(1.2917)">20</span>
<span class="t" style="left:42.60px;top:268.00px;font-size:11.00px;font-weight:400;color:#333333;transform:scaleX(1.2667)">0</span>
<span class="t" style="left:133.62px;top:281.00px;font-size:11.00px;font-weight:400;color:#333333;transform:scaleX(1.3320)">11:30</span>
<span class="t" style="left:310.67px;top:281.00px;font-size:11.00px;font-weight:400;color:#333333;transform:scaleX(1.2808)">12:00</span>
<span class="t" style="left:487.67px;top:281.00px;font-size:11.00px;font-weight:400;color:#333333;transform:scaleX(1.2808)">12:30</span>
<span class="t" style="left:664.67px;top:281.00px;font-size:11.00px;font-weight:400;color:#333333;transform:scaleX(1.2808)">13:00</span>
<span class="t" style="left:841.67px;top:281.00px;font-size:11.00px;font-weight:400;color:#333333;transform:scaleX(1.2808)">13:30</span>
<span class="t" style="left:1018.67px;top:281.00px;font-size:11.00px;font-weight:400;color:#333333;transform:scaleX(1.2808)">14:00</span>
<span class="t" style="left:1195.67px;top:281.00px;font-size:11.00px;font-weight:400;color:#333333;transform:scaleX(1.2808)">14:30</span>
<span class="t" style="left:1372.67px;top:281.00px;font-size:11.00px;font-weight:400;color:#333333;transform:scaleX(1.2808)">15:00</span>
<span class="t" style="left:62.90px;top:199.00px;font-size:12.00px;font-weight:700;color:#f2545b;transform:scaleX(1.3368)">&gt; 30 %</span>
<span class="t" style="left:62.90px;top:221.00px;font-size:10.50px;font-weight:400;color:#f5922a;transform:scaleX(1.2614)">20 % &lt; y &lt;= 30 %</span>
<span class="t" style="left:30.86px;top:352.00px;font-size:15.50px;font-weight:700;color:#ffffff;transform:scaleX(1.1429)">1</span>
<span class="t" style="left:79.20px;top:349.00px;font-size:22.50px;font-weight:700;color:#4d2a77;transform:scaleX(1.3022)">Choose the detection method</span>
<span class="t" style="left:99.50px;top:398.00px;font-size:14.00px;font-weight:400;color:#ffffff;transform:scaleX(1.3819)">Threshold Alert</span>
<span class="t" style="left:258.13px;top:398.00px;font-size:14.00px;font-weight:400;color:#333333;transform:scaleX(1.3687)">Change Alert</span>
<span class="t" style="left:399.00px;top:398.00px;font-size:14.00px;font-weight:400;color:#333333;transform:scaleX(1.3726)">Anomaly Detection</span>
<span class="t" style="left:588.59px;top:398.00px;font-size:14.00px;font-weight:400;color:#333333;transform:scaleX(1.4101)">Outliers Alert</span>
<span class="t" style="left:730.65px;top:398.00px;font-size:14.00px;font-weight:400;color:#333333;transform:scaleX(1.3547)">Forecast Alert</span>
<span class="t" style="left:83.40px;top:429.00px;font-size:14.00px;font-weight:400;color:#333333;transform:scaleX(1.3734)">An alert is triggered whenever a metric crosses a threshold.</span>
<span class="t" style="left:31.00px;top:495.00px;font-size:15.50px;font-weight:700;color:#ffffff;transform:scaleX(1.2500)">2</span>
<span class="t" style="left:79.36px;top:492.00px;font-size:22.50px;font-weight:700;color:#4d2a77;transform:scaleX(1.3370)">Define the metric</span>
<span class="t" style="left:1314.06px;top:521.00px;font-size:13.50px;font-weight:700;color:#333333;transform:scaleX(1.2378)">Source</span>
<span class="t" style="left:1411.44px;top:521.00px;font-size:13.50px;font-weight:700;color:#333333;transform:scaleX(1.2640)">Edit</span>
<span class="t" style="left:105.79px;top:563.00px;font-size:18.00px;font-weight:400;color:#777777;transform:scaleX(1.0111)">a</span>
<span class="t" style="left:164.13px;top:567.00px;font-size:13.30px;font-weight:400;color:#333333;transform:scaleX(1.3743)">Metric</span>
<span class="t" style="left:229.50px;top:568.00px;font-size:13.30px;font-weight:400;color:#333333;transform:scaleX(1.3103)">system.cpu.user</span>
<span class="t" style="left:409.20px;top:567.00px;font-size:13.30px;font-weight:400;color:#333333;transform:scaleX(1.4346)">from</span>
<span class="t" style="left:461.60px;top:567.00px;font-size:13.30px;font-weight:400;color:#333333;transform:scaleX(1.3470)">account:demo</span>
<span class="t" style="left:665.20px;top:567.00px;font-size:13.30px;font-weight:400;color:#333333;transform:scaleX(1.3286)">excluding</span>
<span class="t" style="left:759.01px;top:567.00px;font-size:13.30px;font-weight:400;color:#aaaaaa;transform:scaleX(1.3892)">(none)</span>
<span class="t" style="left:959.30px;top:567.00px;font-size:13.30px;font-weight:400;color:#333333;transform:scaleX(1.3154)">avg by</span>
<span class="t" style="left:1025.88px;top:567.00px;font-size:13.30px;font-weight:400;color:#333333;transform:scaleX(1.4250)">host</span>
<span class="t" style="left:1437.96px;top:565.00px;font-size:15.00px;font-weight:400;color:#555555;transform:scaleX(1.0350)">&lt;/&gt;</span>
<span class="t" style="left:1369.20px;top:598.00px;font-size:14.00px;font-weight:400;color:#2f96c9;transform:scaleX(1.3233)">Advanced...</span>
<span class="t" style="left:95.26px;top:640.00px;font-size:14.00px;font-weight:400;color:#333333;transform:scaleX(1.4443)">Multi Alert</span>
<span class="t" style="left:244.50px;top:640.00px;font-size:14.00px;font-weight:400;color:#333333;transform:scaleX(1.3668)">Trigger a separate alert for each</span>
<span class="t" style="left:540.90px;top:640.00px;font-size:14.00px;font-weight:400;color:#333333;transform:scaleX(1.4038)">host</span>
<span class="t" style="left:640.56px;top:640.00px;font-size:14.00px;font-weight:400;color:#333333;transform:scaleX(1.4362)">reporting your metric</span>
<span class="t" style="left:31.00px;top:681.00px;font-size:15.50px;font-weight:700;color:#ffffff;transform:scaleX(1.2500)">3</span>
<span class="t" style="left:78.70px;top:678.00px;font-size:22.50px;font-weight:700;color:#4d2a77;transform:scaleX(1.3019)">Set alert conditions</span>
<span class="t" style="left:84.20px;top:728.00px;font-size:14.00px;font-weight:400;color:#333333;transform:scaleX(1.3862)">Trigger when the metric is</span>
<span class="t" style="left:324.70px;top:728.00px;font-size:14.00px;font-weight:400;color:#333333;transform:scaleX(1.3289)">above</span>
<span class="t" style="left:429.70px;top:728.00px;font-size:14.00px;font-weight:400;color:#333333;transform:scaleX(1.4075)">the threshold</span>
<span class="t" style="left:561.60px;top:728.00px;font-size:14.00px;font-weight:400;color:#333333;transform:scaleX(1.3357)">on average</span>
<span class="t" style="left:710.40px;top:728.00px;font-size:14.00px;font-weight:400;color:#333333;transform:scaleX(1.3909)">during the last</span>
<span class="t" style="left:850.21px;top:728.00px;font-size:14.00px;font-weight:400;color:#333333;transform:scaleX(1.3949)">5 minutes</span>
<span class="t" style="left:989.20px;top:728.00px;font-size:14.00px;font-weight:400;color:#333333;transform:scaleX(1.3698)">for any</span>
<span class="t" style="left:1052.37px;top:728.00px;font-size:14.00px;font-weight:700;color:#333333;transform:scaleX(1.3276)">host</span>
<span class="t" style="left:84.00px;top:760.00px;font-size:14.00px;font-weight:400;color:#333333;transform:scaleX(1.4097)">Alert threshold:</span>
<span class="t" style="left:351.13px;top:760.00px;font-size:14.00px;font-weight:400;color:#333333;transform:scaleX(1.2714)">&gt;</span>
<span class="t" style="left:372.20px;top:760.00px;font-size:14.00px;font-weight:400;color:#111111;transform:scaleX(1.3000)">30</span>
<span class="t" style="left:605.72px;top:760.00px;font-size:14.00px;font-weight:400;color:#d8323e;transform:scaleX(1.2850)">(30 %)</span>
<span class="t" style="left:84.00px;top:792.00px;font-size:14.00px;font-weight:400;color:#333333;transform:scaleX(1.4060)">Warning threshold:</span>
<span class="t" style="left:351.13px;top:792.00px;font-size:14.00px;font-weight:400;color:#333333;transform:scaleX(1.2714)">&gt;</span>
<span class="t" style="left:372.20px;top:792.00px;font-size:14.00px;font-weight:400;color:#111111;transform:scaleX(1.3000)">20</span>
<span class="t" style="left:605.72px;top:792.00px;font-size:14.00px;font-weight:400;color:#eea52a;transform:scaleX(1.2850)">(20 %)</span>
<span class="t" style="left:84.00px;top:824.00px;font-size:14.00px;font-weight:400;color:#333333;transform:scaleX(1.3821)">Alert recovery threshold:</span>
<span class="t" style="left:341.35px;top:824.00px;font-size:14.00px;font-weight:400;color:#333333;transform:scaleX(1.2467)">&lt;=</span>
<span class="t" style="left:84.00px;top:855.00px;font-size:14.00px;font-weight:400;color:#333333;transform:scaleX(1.3828)">Warning recovery threshold:</span>
<span class="t" style="left:341.35px;top:855.00px;font-size:14.00px;font-weight:400;color:#333333;transform:scaleX(1.2467)">&lt;=</span>
<span class="t" style="left:373.30px;top:856.00px;font-size:14.00px;font-weight:400;color:#b3b3b3;transform:scaleX(1.2847)">Warning recovery threshold</span>
</body></html>
